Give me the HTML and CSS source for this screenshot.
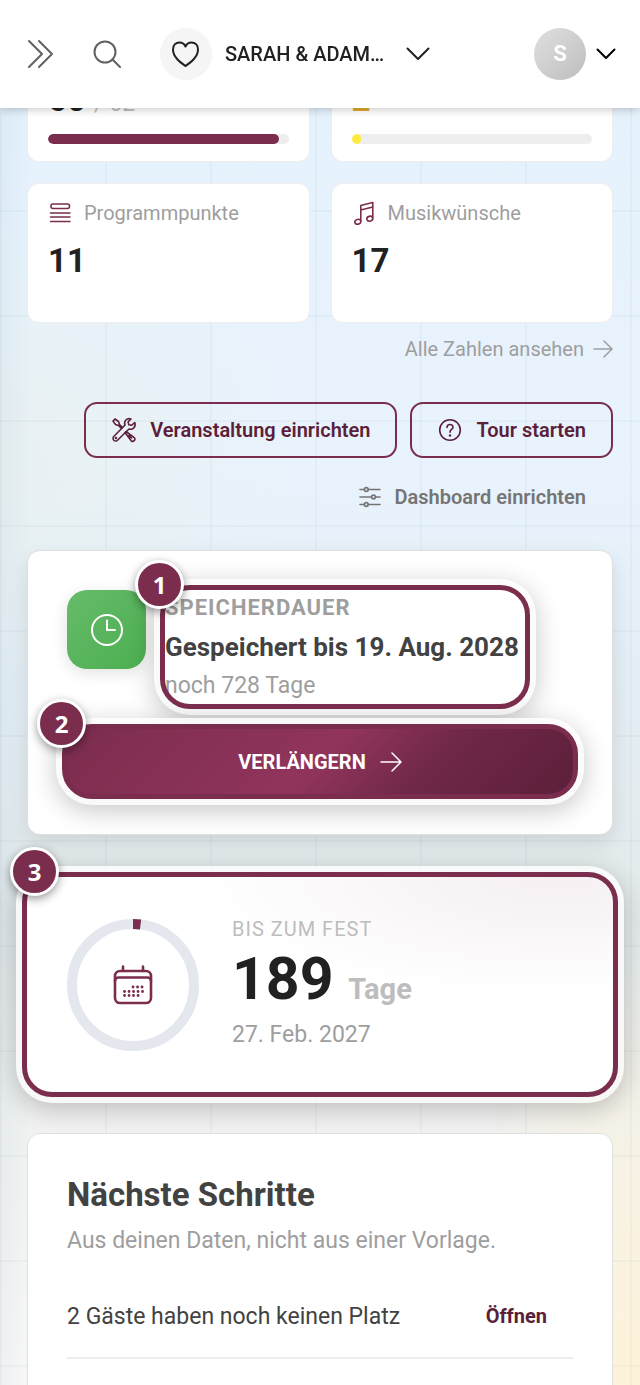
FILE: index.html
```html
<!DOCTYPE html>
<html lang="de">
<head>
    <meta charset="UTF-8">
    <meta name="viewport" content="width=device-width, initial-scale=1.0">
    <title>Dashboard</title>
    <link rel="stylesheet" href="styles.css">
</head>
<body>

<header class="topbar">
    <button class="icon-btn" aria-label="Menü öffnen">
        <svg width="28" height="30" viewBox="0 0 28 30"><path d="M2 2l13 13L2 28M12 2l13 13-13 13"/></svg>
    </button>
    <button class="icon-btn search" aria-label="Suchen">
        <svg width="28" height="28" viewBox="0 0 28 28"><circle cx="12" cy="12" r="10.5"/><path d="M19.500 19.500L27 27"/></svg>
    </button>
    <button class="event-switch">
        <span class="event-icon">
            <svg width="28" height="28" viewBox="0 0 28 28"><path d="M13.500 26C8 22 1 17 1 9.500C1 5 4 2.500 7.500 2.500c3 0 5 1.700 6 4c1-2.300 3-4 6-4c3.500 0 6.500 2.500 6.500 7C26 17 19 22 13.500 26z"/></svg>
        </span>
        <span class="event-name">SARAH &amp; ADAM…</span>
        <svg width="24" height="14" viewBox="0 0 24 14"><path d="M1.500 1.500L12 12 22.500 1.500"/></svg>
    </button>
    <button class="user-menu" aria-label="Benutzermenü">
        <span class="avatar">S</span>
        <svg width="20" height="12" viewBox="0 0 20 12"><path d="M1.500 1.500L10 10l8.500-8.500"/></svg>
    </button>
</header>

<main class="dashboard">
    <section class="stats">
        <div class="stat-card">
            <p class="stat-label">Gäste</p>
            <p class="stat-number">60 <small>/ 62</small></p>
            <div class="bar"><div class="bar-fill" style="width: 96%"></div></div>
        </div>
        <div class="stat-card">
            <p class="stat-label"></p>
            <p class="stat-number warn">2</p>
            <div class="bar"><div class="bar-fill warn" style="width: 4%"></div></div>
        </div>
        <div class="stat-card">
            <p class="stat-label">
                <svg width="24" height="24" viewBox="0 0 24 24"><rect x="3" y="3" width="18.500" height="4.500" rx="2"/><path d="M2.500 12h19.500M2.500 16h19.500M2.500 20.500h19.500"/></svg>
                Programmpunkte
            </p>
            <p class="stat-number">11</p>
        </div>
        <div class="stat-card">
            <p class="stat-label">
                <svg width="24" height="24" viewBox="0 0 24 24"><ellipse cx="5.800" cy="20.800" rx="3" ry="2.400" transform="rotate(-15 5.800 20.800)"/><ellipse cx="17.800" cy="17.700" rx="3" ry="2.400" transform="rotate(-15 17.800 17.700)"/><path d="M8.800 20V4.500L20.800 1.500V17M8.800 9l12-3"/></svg>
                Musikwünsche
            </p>
            <p class="stat-number">17</p>
        </div>
    </section>

    <a class="all-link" href="#">
        Alle Zahlen ansehen
        <svg width="20" height="18" viewBox="0 0 20 18"><path d="M1 9h18M11 1l8 8-8 8"/></svg>
    </a>

    <div class="actions">
        <button class="btn-outline">
            <svg width="26" height="26" viewBox="0 0 26 26"><path d="M10.500 11.500L7.500 8.500 4.500 7.500 2 4 4 2l3.500 2.500 1 3 3 3M15 14.500l8.300 6.200a2.200 2.200 0 0 1-3.100 3.100L14 15.500M18 18.500l2.500 2.500"/><path d="M23.800 5.500l-3.300 2.800-2.800-.600-.600-2.800L20 2c-4.200-1.300-7.500 2-6 6L2.800 19.500a2.600 2.600 0 0 0 3.700 3.700L18 12c4 1.200 7.200-2.500 5.800-6.500z"/><circle cx="5" cy="21" r=".5"/></svg>
            Veranstaltung einrichten
        </button>
        <button class="btn-outline">
            <svg width="26" height="26" viewBox="0 0 26 26"><circle cx="13" cy="13" r="10.300"/><path d="M10 10.500c0-4 6-4 6-.300 0 2.300-3 2.300-3 5"/><circle class="dot" cx="13" cy="18.500" r="1.200"/></svg>
            Tour starten
        </button>
        <button class="btn-plain">
            <svg width="22" height="22" viewBox="0 0 22 22"><path d="M1 3.500h4.500M9 3.500h12M1 11h11.500M16.500 11H21M1 18.500h4.500M9 18.500h12"/><circle cx="7.300" cy="3.500" r="1.900"/><circle cx="14.500" cy="11" r="1.900"/><circle cx="7.300" cy="18.500" r="1.900"/></svg>
            Dashboard einrichten
        </button>
    </div>

    <section class="card storage">
        <div class="storage-info">
            <div class="storage-icon">
                <svg width="36" height="36" viewBox="0 0 36 36"><circle cx="18" cy="18" r="15"/><path d="M18 8.500V18h8"/></svg>
            </div>
            <div class="storage-text marked">
                <p class="overline">SPEICHERDAUER</p>
                <p class="saved-until">Gespeichert bis 19. Aug. 2028</p>
                <p class="remaining">noch 728 Tage</p>
                <span class="badge">1</span>
            </div>
        </div>
        <div class="marked extend">
            <button class="btn-primary">
                VERLÄNGERN
                <svg width="22" height="20" viewBox="0 0 22 20"><path d="M1 10h20M12 1l9 9-9 9"/></svg>
            </button>
            <span class="badge">2</span>
        </div>
    </section>

    <section class="card countdown marked">
        <div class="ring">
            <svg width="132" height="132" viewBox="0 0 132 132">
                <circle class="ring-track" cx="66" cy="66" r="61"/>
                <circle class="ring-value" cx="66" cy="66" r="61" pathLength="100" transform="rotate(-90 66 66)"/>
                <g class="ring-icon">
                    <rect x="48" y="52" width="36" height="32" rx="5"/>
                    <path d="M48 62c0-3 2-3.500 4-3.500h28c2 0 4 .500 4 3.500M56 52v-4.500M76 52v-4.500"/>
                    <path class="dots" d="M66 68h10M57.500 72.500h18.500M57.500 76.500h14"/>
                </g>
            </svg>
        </div>
        <div class="countdown-text">
            <p class="countdown-label">BIS ZUM FEST</p>
            <p class="countdown-days">189 <span>Tage</span></p>
            <p class="countdown-date">27. Feb. 2027</p>
        </div>
        <span class="badge edge">3</span>
    </section>

    <section class="card next-steps">
        <h2>Nächste Schritte</h2>
        <p class="sub">Aus deinen Daten, nicht aus einer Vorlage.</p>
        <ul class="steps">
            <li>
                <span>2 Gäste haben noch keinen Platz</span>
                <a href="#">Öffnen</a>
            </li>
        </ul>
    </section>
</main>

</body>
</html>
```

FILE: styles.css
```css
* {
    box-sizing: border-box;
}

body {
    font-family: Roboto, "Liberation Sans", sans-serif;
    margin: 0;
    height: 100vh;
    overflow: hidden;
    color: #212121;
    /* grid lines over the soft colour wash */
    background-image:
        linear-gradient(90deg, rgba(90, 120, 140, 0.05) 2px, transparent 2px),
        linear-gradient(rgba(90, 120, 140, 0.05) 2px, transparent 2px),
        linear-gradient(90deg, rgba(120, 160, 190, 0.08), transparent 5%),
        radial-gradient(ellipse 30% 30% at 100% 100%, rgba(255, 241, 208, 0.8), transparent),
        radial-gradient(ellipse 50% 20% at 0 34%, rgba(232, 240, 238, 0.8), transparent),
        linear-gradient(#e4f1fc, #e9f3fd 34%, #e3edf4 50%, #e4eaea 66%, #f0f1f0 80%, #f8f8f8);
    background-size: 105px 105px, 105px 105px, auto, auto, auto, auto;
}

p, h2, ul {
    margin: 0;
    padding: 0;
}

button {
    font-family: inherit;
    border: none;
    background: none;
    padding: 0;
    cursor: pointer;
}

svg {
    display: block;
    flex: none;
    fill: none;
    stroke: currentColor;
    stroke-width: 2px;
    stroke-linecap: round;
    stroke-linejoin: round;
}

/* Top bar */
.topbar {
    position: fixed;
    top: 0;
    left: 0;
    right: 0;
    z-index: 10;
    height: 108px;
    padding: 0 24px 0 27px;
    display: flex;
    align-items: center;
    background-color: #fff;
    box-shadow: 0 2px 8px rgba(0, 0, 0, 0.2);
}

.icon-btn {
    color: #616161;
}

.search {
    margin-left: 38px;
}

.event-switch {
    display: flex;
    align-items: center;
    margin-left: 39px;
    color: #212121;
    font-size: 20px;
    font-weight: 500;
}

.event-icon {
    display: flex;
    align-items: center;
    justify-content: center;
    width: 52px;
    height: 52px;
    border-radius: 50%;
    background-color: #f5f5f5;
}

.event-name {
    margin: 0 22px 0 13px;
    text-align: left;
    white-space: nowrap;
}

.user-menu {
    display: flex;
    align-items: center;
    gap: 10px;
    margin-left: auto;
    color: #000;
}

.avatar {
    width: 52px;
    height: 52px;
    border-radius: 50%;
    background: linear-gradient(135deg, #e0e0e0, #bdbdbd);
    color: #fff;
    font-size: 22px;
    font-weight: bold;
    line-height: 52px;
}

/* Page */
.dashboard {
    padding: 22px 27px;
    display: flex;
    flex-direction: column;
}

.stats {
    display: grid;
    grid-template-columns: 1fr 1fr;
    gap: 21px;
}

.stat-card {
    height: 140px;
    padding: 16px 20px;
    background-color: #fff;
    border: 1px solid #eee;
    border-radius: 12px;
}

.stat-label {
    display: flex;
    align-items: center;
    gap: 12px;
    min-height: 26px;
    color: #9e9e9e;
    font-size: 20px;
    line-height: 26px;
}

.stat-label svg {
    color: #7b2d4e;
    stroke-width: 1.6px;
}

.stat-number {
    margin: 15px 0 14px;
    font-size: 33px;
    font-weight: bold;
    line-height: 40px;
}

.stat-number small {
    color: #bdbdbd;
    font-size: 23px;
    font-weight: normal;
    line-height: 24px;
}

.stat-number.warn {
    color: #e0a82e;
}

.bar {
    height: 10px;
    border-radius: 5px;
    background-color: #eee;
    overflow: hidden;
}

.bar-fill {
    height: 100%;
    border-radius: 5px;
    background-color: #7b2d4e;
}

.bar-fill.warn {
    background-color: #ffeb3b;
}

.all-link {
    display: flex;
    align-items: center;
    align-self: flex-end;
    gap: 9px;
    margin-top: 12px;
    color: #9e9e9e;
    font-size: 20px;
    line-height: 28px;
    text-decoration: none;
}

.all-link svg {
    stroke-width: 1.5px;
}

.actions {
    display: flex;
    flex-wrap: wrap;
    justify-content: flex-end;
    gap: 11px 13px;
    margin-top: 39px;
}

.btn-outline,
.btn-plain {
    display: flex;
    align-items: center;
    gap: 13px;
    height: 56px;
    padding: 0 25px;
    border: 2px solid #7b2d4e;
    border-radius: 13px;
    color: #5c1f3a;
    font-size: 20px;
    font-weight: 600;
}

.btn-outline svg,
.btn-plain svg {
    stroke-width: 1.6px;
}

.btn-outline .dot {
    fill: currentColor;
    stroke: none;
}

.btn-plain {
    border-color: transparent;
    color: #757575;
}

/* Cards */
.card {
    background-color: #fff;
    border: 1px solid #e0e0e0;
    border-radius: 13px;
}

.storage {
    margin-top: 25px;
    padding: 39px 39px 40px;
    box-shadow: 0 8px 20px rgba(0, 0, 0, 0.1);
}

.storage-info {
    display: flex;
    gap: 19px;
}

.storage-icon {
    display: flex;
    align-items: center;
    justify-content: center;
    flex: none;
    width: 79px;
    height: 79px;
    border-radius: 20px;
    background: linear-gradient(135deg, #66bb6a, #4caf50);
    box-shadow: 0 4px 16px rgba(0, 0, 0, 0.12);
    color: #fff;
}

.storage-text {
    padding-right: 6px;
}

.overline {
    color: #9e9e9e;
    font-size: 22px;
    font-weight: bold;
    line-height: 36px;
    letter-spacing: 1px;
}

.saved-until {
    color: #424242;
    font-size: 26px;
    font-weight: bold;
    line-height: 42px;
}

.remaining {
    color: #9e9e9e;
    font-size: 23px;
    line-height: 36px;
}

/* Numbered highlight frame */
.marked {
    position: relative;
}

.marked::after {
    content: "";
    position: absolute;
    inset: -5px;
    border: 5px solid #7b2d4e;
    border-radius: 30px;
    box-shadow: 0 0 0 6px rgba(255, 255, 255, 0.85), 0 6px 26px 6px rgba(0, 0, 0, 0.22);
    pointer-events: none;
}

.badge {
    position: absolute;
    top: -30px;
    left: -30px;
    z-index: 2;
    width: 49px;
    height: 49px;
    border: 3px solid #fff;
    border-radius: 50%;
    background-color: #7b2d4e;
    box-shadow: 0 3px 10px rgba(0, 0, 0, 0.4);
    color: #fff;
    font-family: "Noto Sans", sans-serif;
    font-size: 24px;
    font-weight: bold;
    line-height: 43px;
    text-align: center;
}

.badge.edge {
    left: -17px;
}

.extend {
    margin-top: 25px;
}

.btn-primary {
    display: flex;
    align-items: center;
    justify-content: center;
    gap: 14px;
    width: 100%;
    height: 65px;
    border-radius: 20px;
    background: linear-gradient(135deg, #7b2d4e, #91345c 50%, #702848 70%, #5c1f3a);
    color: #fff;
    font-size: 20px;
    font-weight: bold;
}

.btn-primary svg {
    stroke-width: 1.5px;
}

.countdown {
    display: flex;
    align-items: center;
    gap: 33px;
    margin-top: 42px;
    height: 215px;
    padding: 0 40px;
    border: none;
    border-radius: 25px;
    background: radial-gradient(ellipse 60% 55% at 90% 0, #f5eff2, #fff) #fff;
}

.ring-track {
    stroke: #e4e7ee;
    stroke-width: 10px;
}

.ring-value {
    stroke: #7b2d4e;
    stroke-width: 10px;
    stroke-linecap: butt;
    stroke-dasharray: 2 98;
}

.ring-icon {
    color: #7b2d4e;
    stroke-width: 2.600px;
}

.ring-icon .dots {
    stroke-dasharray: 0.1 4.4;
    stroke-width: 2.800px;
}

.countdown-label {
    color: #bdbdbd;
    font-size: 20px;
    line-height: 28px;
    letter-spacing: 1px;
}

.countdown-days {
    font-size: 59px;
    font-weight: bold;
    line-height: 72px;
}

.countdown-days span {
    color: #bdbdbd;
    font-size: 29px;
    line-height: 30px;
}

.countdown-date {
    color: #9e9e9e;
    font-size: 23px;
    line-height: 40px;
}

.next-steps {
    margin-top: 41px;
    height: 400px;
    padding: 39px;
}

.next-steps h2 {
    color: #424242;
    font-size: 33px;
    font-weight: bold;
    line-height: 44px;
}

.sub {
    color: #9e9e9e;
    font-size: 23px;
    line-height: 48px;
}

.steps {
    list-style: none;
}

.steps li {
    display: flex;
    align-items: center;
    justify-content: space-between;
    margin-top: 10px;
    height: 84px;
    border-bottom: 2px solid #eee;
    color: #424242;
    font-size: 23px;
}

.steps a {
    padding: 0 26px;
    color: #5c1f3a;
    font-size: 20px;
    font-weight: bold;
    text-decoration: none;
}
```
